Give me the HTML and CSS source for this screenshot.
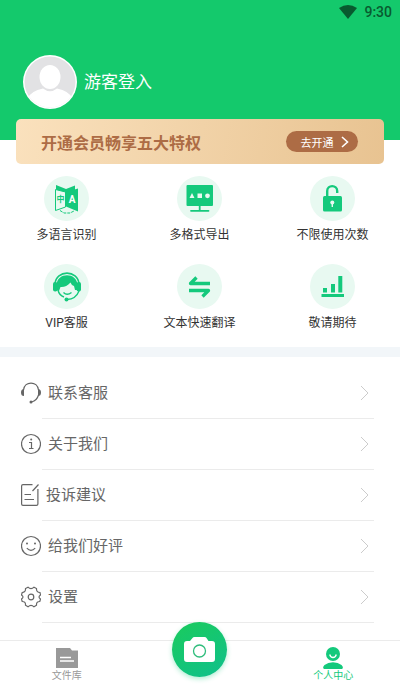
FILE: index.html
```html
<!DOCTYPE html>
<html lang="zh-CN">
<head>
<meta charset="utf-8">
<meta name="viewport" content="width=device-width, initial-scale=1">
<title>个人中心</title>
<link rel="stylesheet" href="styles.css">
</head>
<body>
<div class="app">
  <header class="header">
    <div class="status">
      <svg width="18" height="14" viewBox="0 0 18 14" aria-hidden="true"><path d="M0 3Q9-3 18 3L9 14Z" fill="#085a2f"/></svg>
      <span>9:30</span>
    </div>
    <a class="profile" href="#login">
      <svg class="avatar" viewBox="0 0 54 54" aria-hidden="true">
        <defs><clipPath id="face"><circle cx="27" cy="27" r="25.5"/></clipPath></defs>
        <circle cx="27" cy="27" r="27" fill="#fff"/>
        <circle cx="27" cy="27" r="25.5" fill="#e2e2e4"/>
        <g clip-path="url(#face)">
          <path d="M5 54V43Q8 36 20 33.500Q27 39 34 33.500Q46 36 49 43V54Z" fill="#fff"/>
          <ellipse cx="27" cy="22" rx="10.500" ry="12" fill="#fff"/>
        </g>
      </svg>
      <span>游客登入</span>
    </a>
  </header>

  <main>
    <section class="banner">
      <h2>开通会员畅享五大特权</h2>
      <button class="open" type="button">去开通
        <svg width="8" height="12" viewBox="0 0 8 12" aria-hidden="true"><path d="M1 1L6.500 6L1 11" fill="none" stroke="#fff" stroke-width="1.600"/></svg>
      </button>
    </section>

    <section class="features">
      <a class="feature" href="#language">
        <svg viewBox="0 0 45 45" aria-hidden="true">
          <circle cx="22.500" cy="22.500" r="22.500" fill="#e8f9f1"/>
          <path d="M12 9L22 13L31 9.500V14L22 18L12 14Z" fill="#14c97c"/>
          <path d="M11.500 13.500L21.500 16V31L11.500 34.500Z" fill="#e8f9f1" stroke="#14c97c"/>
          <path d="M22 16L34 12.500V35.500L22 30.500Z" fill="#14c97c"/>
          <path d="M16 34.500L20 37H26L30 35" fill="none" stroke="#14c97c" stroke-dasharray="3 1"/>
          <text x="16.500" y="26" class="glyph glyph-zh">中</text>
          <text x="28" y="27" class="glyph glyph-en">A</text>
        </svg>
        <span>多语言识别</span>
      </a>
      <a class="feature" href="#export">
        <svg viewBox="0 0 45 45" aria-hidden="true">
          <circle cx="22.500" cy="22.500" r="22.500" fill="#e8f9f1"/>
          <rect x="9.500" y="9" width="26.500" height="21" rx="1" fill="#14c97c"/>
          <path d="M22.700 30V34.500M14 34.800H31.500" fill="none" stroke="#14c97c" stroke-width="1.800" stroke-linecap="round"/>
          <path d="M12.500 22L15 17L17.500 22ZM20.500 17.500H25V22H20.500Z" fill="#e8f9f1"/>
          <circle cx="30.500" cy="19.800" r="2.400" fill="#e8f9f1"/>
        </svg>
        <span>多格式导出</span>
      </a>
      <a class="feature" href="#unlimited">
        <svg viewBox="0 0 45 45" aria-hidden="true">
          <circle cx="22.500" cy="22.500" r="22.500" fill="#e8f9f1"/>
          <path d="M17.200 21V15C17.200 8.500 27.200 8.500 27.200 15V17" fill="none" stroke="#14c97c" stroke-width="2.400"/>
          <rect x="13" y="20" width="19" height="15.500" rx="1.500" fill="#14c97c"/>
          <circle cx="22.300" cy="26.500" r="2" fill="#e8f9f1"/><path d="M22.300 27V31" stroke="#e8f9f1" stroke-width="1.400"/>
        </svg>
        <span>不限使用次数</span>
      </a>
      <a class="feature" href="#vip">
        <svg viewBox="0 0 45 45" aria-hidden="true">
          <circle cx="22.500" cy="22.500" r="22.500" fill="#e8f9f1"/>
          <path d="M11 20C12 5.500 34 5.500 35 20" fill="none" stroke="#14c97c" stroke-width="1.600"/>
          <path d="M12.500 26V21C13 8 33 8 33.500 21V26H31L30 22Q27.500 21.500 26.500 18.500Q22 23.500 16.500 23L15 27Z" fill="#14c97c"/>
          <rect x="9" y="18" width="4.500" height="9.500" rx="2" fill="#14c97c"/>
          <rect x="32.500" y="18" width="4.500" height="9.500" rx="2" fill="#14c97c"/>
          <path d="M14 26Q15 31 20 33M19.500 28.500Q23 32 27.500 28.500" fill="none" stroke="#14c97c" stroke-width="1.400"/>
          <path d="M35 27Q32 35 23 35.500" fill="none" stroke="#14c97c" stroke-width="1.300"/>
          <circle cx="22.500" cy="35.500" r="2" fill="#14c97c"/>
        </svg>
        <span>VIP客服</span>
      </a>
      <a class="feature" href="#translate">
        <svg viewBox="0 0 45 45" aria-hidden="true">
          <circle cx="22.500" cy="22.500" r="22.500" fill="#e8f9f1"/>
          <path d="M33 19.500H13.500L19.500 13.500M12 26.500H31.500L25.500 32.500" fill="none" stroke="#14c97c" stroke-width="3.300" stroke-linejoin="round"/>
        </svg>
        <span>文本快速翻译</span>
      </a>
      <a class="feature" href="#soon">
        <svg viewBox="0 0 45 45" aria-hidden="true">
          <circle cx="22.500" cy="22.500" r="22.500" fill="#e8f9f1"/>
          <path d="M13 24H17V28.500H13ZM21 20H25V28.500H21ZM28.300 12H32.300V28.500H28.300ZM11.500 30H34V33H11.500Z" fill="#14c97c"/>
        </svg>
        <span>敬请期待</span>
      </a>
    </section>

    <ul class="menu">
      <li><a href="#contact">
        <svg class="icon" width="20" height="22" viewBox="0 0 20 22" aria-hidden="true"><path d="M2.500 8C3.500-1.300 16.500-1.300 17.500 8M17.500 13Q16 18.500 10.500 20"/><path class="solid" d="M3 7V14Q0 14 0 10.500T3 7ZM17 7V14Q20 14 20 10.500T17 7Z"/><circle class="solid" cx="10" cy="20" r="1.500"/></svg>
        <span>联系客服</span>
        <svg class="chevron" width="9" height="16" viewBox="0 0 9 16" aria-hidden="true"><path d="M1 1L8 8L1 15"/></svg>
      </a></li>
      <li><a href="#about">
        <svg class="icon" width="20" height="22" viewBox="0 0 20 22" aria-hidden="true"><circle cx="10" cy="11" r="9.500"/><path d="M8 9.500H10.500V15.500M8 15.500H12.500"/><circle class="solid" cx="10.200" cy="6.500" r="1"/></svg>
        <span>关于我们</span>
        <svg class="chevron" width="9" height="16" viewBox="0 0 9 16" aria-hidden="true"><path d="M1 1L8 8L1 15"/></svg>
      </a></li>
      <li><a href="#feedback">
        <svg class="icon" width="18" height="22" viewBox="0 0 18 22" aria-hidden="true"><path d="M11.500.600H2Q.600.600.600 2V20Q.600 21.400 2 21.400H15.500Q16.900 21.400 16.900 20V5M17.500.500L11.500 7M3.500 10.500H10M3.500 15.500H13"/></svg>
        <span>投诉建议</span>
        <svg class="chevron" width="9" height="16" viewBox="0 0 9 16" aria-hidden="true"><path d="M1 1L8 8L1 15"/></svg>
      </a></li>
      <li><a href="#rate">
        <svg class="icon" width="20" height="22" viewBox="0 0 20 22" aria-hidden="true"><circle cx="10" cy="11" r="9.500"/><path d="M5.800 13.200Q10 17.500 14.200 13.200"/><circle class="solid" cx="6" cy="8.500" r="1"/><circle class="solid" cx="14" cy="8.500" r="1"/></svg>
        <span>给我们好评</span>
        <svg class="chevron" width="9" height="16" viewBox="0 0 9 16" aria-hidden="true"><path d="M1 1L8 8L1 15"/></svg>
      </a></li>
      <li><a href="#settings">
        <svg class="icon" width="20" height="22" viewBox="0 0 20 22" aria-hidden="true"><path d="M7 1.200Q10 4.200 13 1.200L15.500 2.500Q15.200 6.300 19 6.500L19.500 9Q16.500 11 19.500 13L18.800 15.500Q15.200 15.500 15.500 19.300L13 20.800Q10 17.800 7 20.800L4.500 19.300Q4.800 15.500 1.200 15.500L.500 13Q3.500 11 .500 9L1.200 6.500Q4.800 6.300 4.500 2.500Z"/><circle cx="10" cy="11" r="2.800"/></svg>
        <span>设置</span>
        <svg class="chevron" width="9" height="16" viewBox="0 0 9 16" aria-hidden="true"><path d="M1 1L8 8L1 15"/></svg>
      </a></li>
    </ul>
  </main>

  <nav class="tabs">
    <a class="tab" href="#files">
      <svg width="22" height="22" viewBox="0 -1 22 22" aria-hidden="true"><path d="M0 0H14L16 2.500H22V20H0Z" fill="#999"/><path d="M4 9.500H15M4 13H18" stroke="#fff" stroke-width="1.300"/></svg>
      <span>文件库</span>
    </a>
    <button class="camera" type="button" aria-label="拍照">
      <svg width="31" height="25" viewBox="0 0 31 25" aria-hidden="true"><path d="M3 4H6L8.500 1Q9 0 10.500 0H20.500Q22 0 22.500 1L24.500 4H28Q31 4 31 7V22Q31 25 28 25H3Q0 25 0 22V7Q0 4 3 4Z" fill="#fff"/><circle cx="15.500" cy="14" r="6" fill="none" stroke="#2fbd7c" stroke-width="1.300"/></svg>
    </button>
    <a class="tab tab-active" href="#me" aria-current="page">
      <svg width="22" height="22" viewBox="0 0 22 22" aria-hidden="true"><circle cx="11" cy="7" r="7" fill="#14c97c"/><path d="M7.700 7.500Q8.500 10.500 11 10.500T14.300 7.500" fill="none" stroke="#fff" stroke-width="1.300"/><path d="M2 22Q0 20.500 2.500 18Q6 15.300 11 15.300T19.500 18Q22 20.500 20 22Z" fill="#14c97c"/></svg>
      <span>个人中心</span>
    </a>
  </nav>
</div>
</body>
</html>
```
FILE: styles.css
```css
* {
  box-sizing: border-box;
}

body {
  margin: 0;
  background: #fff;
  color: #333;
  font-family: Roboto, "Noto Sans CJK SC", sans-serif;
}

a {
  color: inherit;
  text-decoration: none;
}

button {
  border: 0;
  padding: 0;
  font: inherit;
}

svg {
  display: block;
  flex: none;
}

.app {
  display: flex;
  flex-direction: column;
  min-height: 100vh;
}

main {
  flex: 1;
}

.header {
  padding-bottom: 31px;
  background: #14c96c;
}

.status {
  display: flex;
  justify-content: flex-end;
  align-items: center;
  gap: 7px;
  height: 24px;
  padding-right: 8px;
  color: #085a2f;
  font-size: 14px;
  font-weight: 500;
}

.profile {
  display: flex;
  align-items: center;
  gap: 7px;
  margin-top: 31px;
  padding-left: 23px;
  color: #fff;
  font-size: 17px;
}

.profile span,
.menu span {
  padding-bottom: 3px;
}

.avatar {
  width: 54px;
  height: 54px;
}

.banner {
  display: flex;
  align-items: center;
  justify-content: space-between;
  height: 45px;
  margin: -21px 16px 0;
  padding: 0 26px 0 25px;
  border-radius: 5px;
  background: linear-gradient(100deg, #fae1bd, #e8c391);
}

.banner h2 {
  margin: 0;
  color: #ad6c45;
  font-size: 16px;
  font-weight: 700;
}

.open {
  display: flex;
  align-items: center;
  justify-content: center;
  gap: 7px;
  width: 72px;
  height: 21px;
  padding-left: 5px;
  border-radius: 11px;
  background: #ad6c45;
  color: #fff;
  font-size: 11px;
}

.features {
  display: grid;
  grid-template-columns: repeat(3, 1fr);
  row-gap: 18px;
  padding: 12px 1px 13px 0;
  border-bottom: 10px solid #f2f6f9;
}

.feature {
  display: flex;
  flex-direction: column;
  align-items: center;
  gap: 3px;
  font-size: 12px;
  line-height: 22px;
}

.feature svg {
  width: 45px;
  height: 45px;
}

.feature span {
  white-space: nowrap;
}

.glyph {
  font-weight: 700;
  text-anchor: middle;
}

.glyph-zh {
  fill: #14c97c;
  font-size: 8px;
}

.glyph-en {
  fill: #fff;
  font-size: 10px;
}

.menu {
  margin: 0;
  padding: 11px 26px 0 21px;
  list-style: none;
}

.menu a {
  display: flex;
  align-items: center;
  gap: 7px;
  height: 50px;
  padding-right: 5px;
  color: #666;
  font-size: 15px;
}

.menu li::after {
  display: block;
  height: 1px;
  margin-left: 21px;
  background: #ebebeb;
  content: "";
}

.icon,
.chevron {
  fill: none;
  stroke: #666;
  stroke-width: 1.2px;
}

.icon .solid {
  fill: #666;
  stroke: none;
}

.chevron {
  margin-left: auto;
  stroke: #ccc;
  stroke-width: 1px;
}

.tabs {
  display: grid;
  grid-template-columns: repeat(3, 1fr);
  height: 50px;
  border-top: 1px solid #ebebeb;
}

.tab {
  display: flex;
  flex-direction: column;
  align-items: center;
  justify-content: flex-end;
  padding-bottom: 7px;
  color: #999;
  font-size: 10px;
  line-height: 14px;
}

.tab-active {
  color: #14c97c;
}

.camera {
  display: grid;
  place-items: center;
  justify-self: center;
  width: 55px;
  height: 55px;
  margin-top: -19px;
  border-radius: 50%;
  background: linear-gradient(150deg, #1acb5c, #0fc08c);
  box-shadow: 0 2px 5px #14c97c55;
}
```
